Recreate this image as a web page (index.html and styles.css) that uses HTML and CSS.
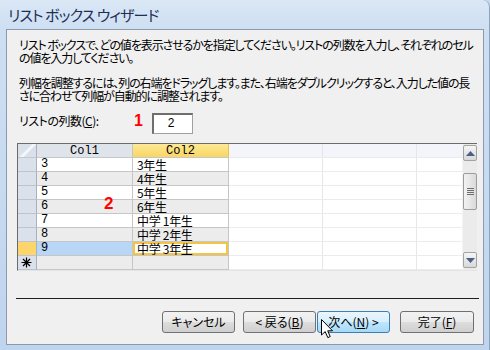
FILE: index.html
```html
<!DOCTYPE html>
<html lang="ja">
<head>
  <meta charset="UTF-8" />
  <title>リスト ボックス ウィザード</title>
  <link rel="stylesheet" href="styles.css">
</head>
<body>
  <div class="window">
    <div class="titlebar">リスト ボックス ウィザード</div>
    <div class="panel">
      <p class="intro">リスト ボックスで、どの値を表示させるかを指定してください。リストの列数を入力し、それぞれのセル<br>の値を入力してください。</p>
      <p class="intro">列幅を調整するには、列の右端をドラッグします。また、右端をダブルクリックすると、入力した値の長<br>さに合わせて列幅が自動的に調整されます。</p>

      <div class="count-row">
        <label class="count-label">リストの列数(<u>C</u>):</label>
        <span class="mark mark-1">1</span>
        <div class="count-box">2</div>
      </div>

      <div class="grid">
        <div class="sheet">
          <div class="row head">
            <div class="cell sel corner"></div>
            <div class="cell c1">Col1</div>
            <div class="cell c2 active-col">Col2</div>
            <div class="cell cx w94"></div>
            <div class="cell cx w94"></div>
            <div class="cell cx w45"></div>
          </div>
          <div class="row">
            <div class="cell sel"></div><div class="cell c1">3</div><div class="cell c2">3年生</div>
            <div class="cell cx w94"></div><div class="cell cx w94"></div><div class="cell cx w45"></div>
          </div>
          <div class="row alt">
            <div class="cell sel"></div><div class="cell c1">4</div><div class="cell c2">4年生</div>
            <div class="cell cx w94"></div><div class="cell cx w94"></div><div class="cell cx w45"></div>
          </div>
          <div class="row">
            <div class="cell sel"></div><div class="cell c1">5</div><div class="cell c2">5年生</div>
            <div class="cell cx w94"></div><div class="cell cx w94"></div><div class="cell cx w45"></div>
          </div>
          <div class="row alt">
            <div class="cell sel"></div><div class="cell c1">6</div><div class="cell c2">6年生</div>
            <div class="cell cx w94"></div><div class="cell cx w94"></div><div class="cell cx w45"></div>
          </div>
          <div class="row">
            <div class="cell sel"></div><div class="cell c1">7</div><div class="cell c2">中学 1年生</div>
            <div class="cell cx w94"></div><div class="cell cx w94"></div><div class="cell cx w45"></div>
          </div>
          <div class="row alt">
            <div class="cell sel"></div><div class="cell c1">8</div><div class="cell c2">中学 2年生</div>
            <div class="cell cx w94"></div><div class="cell cx w94"></div><div class="cell cx w45"></div>
          </div>
          <div class="row current">
            <div class="cell sel"></div><div class="cell c1">9</div><div class="cell c2 editing">中学 3年生</div>
            <div class="cell cx w94"></div><div class="cell cx w94"></div><div class="cell cx w45"></div>
          </div>
          <div class="row alt new">
            <div class="cell sel">
              <svg width="11" height="11" viewBox="0 0 11 11"><path d="M5.5 0.5v10M0.5 5.5h10M2 2l7 7M9 2l-7 7" stroke="#000" stroke-width="1.2" fill="none"/></svg>
            </div>
            <div class="cell c1"></div><div class="cell c2"></div>
            <div class="cell cx w94"></div><div class="cell cx w94"></div><div class="cell cx w45"></div>
          </div>
        </div>

        <div class="scrollbar">
          <div class="sb-btn sb-up"><svg width="9" height="5" viewBox="0 0 9 5"><path d="M0 5L4.5 0L9 5Z" fill="#4a5f86"/></svg></div>
          <div class="sb-thumb"><span></span><span></span><span></span><span></span></div>
          <div class="sb-space"></div>
          <div class="sb-btn sb-down"><svg width="9" height="5" viewBox="0 0 9 5"><path d="M0 0L4.5 5L9 0Z" fill="#4a5f86"/></svg></div>
        </div>

        <span class="mark mark-2">2</span>
      </div>

      <div class="separator"></div>

      <div class="buttons">
        <button class="btn">キャンセル</button>
        <button class="btn btn-back">&lt; 戻る(<u>B</u>)</button>
        <button class="btn btn-next hover">次へ(<u>N</u>) &gt;</button>
        <button class="btn btn-finish">完了(<u>F</u>)</button>
      </div>
    </div>

    <!-- mouse pointer over the next button -->
    <svg class="cursor" width="13" height="20" viewBox="0 0 13 20">
      <path d="M0.5 0.5L0.5 16L4.2 12.6L6.8 18.6L9.2 17.6L6.7 11.8L11.5 11.8Z" fill="#fff" stroke="#000" stroke-width="1" stroke-linejoin="miter"/>
    </svg>
  </div>
</body>
</html>
```

FILE: styles.css
```css
* {
  margin: 0;
  padding: 0;
  box-sizing: border-box;
}

body {
  width: 490px;
  height: 350px;
  overflow: hidden;
  font-family: "Noto Sans CJK JP", "Noto Sans", sans-serif;
  font-size: 12px;
  color: #000;
  background: #c3d8ef;
}

.window {
  position: relative;
  height: 350px;
  background: linear-gradient(180deg, #dae7f5 0%, #cddff2 30px, #bfd5ee 100%);
  border-top-right-radius: 7px;
  border-right: 1px solid #8ea4be;
  padding: 0 5px 5px 6px;
  display: flex;
  flex-direction: column;
}

.titlebar {
  height: 29px;
  line-height: 29px;
  padding-left: 2px;
  font-size: 15px;
  letter-spacing: -0.9px;
  color: #1d2f57;
  font-feature-settings: "palt";
  white-space: nowrap;
}

.panel {
  flex: 1;
  background: #f0f0f0;
  border: 1px solid #8e9aab;
  padding-left: 10px;
  display: flex;
  flex-direction: column;
}

.intro {
  padding-left: 2px;
  line-height: 13px;
  white-space: nowrap;
  font-feature-settings: "palt";
  letter-spacing: -1.1px;
  margin-top: 8px;
}

.intro + .intro {
  margin-top: 12px;
}

.count-row {
  display: flex;
  align-items: flex-start;
  padding-left: 2px;
  margin-top: 11px;
  height: 21px;
}

.count-label {
  width: 115px;
  line-height: 13px;
  padding-top: 1px;
  letter-spacing: -0.5px;
  font-feature-settings: "palt";
}

.mark {
  color: #f00;
  font-family: "Liberation Sans", Arial, sans-serif;
  font-weight: bold;
  font-size: 16px;
}

.mark-1 {
  width: 18px;
  line-height: 16px;
}

.count-box {
  width: 41px;
  height: 21px;
  background: #fff;
  border: 1px solid #a0a0a0;
  border-top: 2px solid #6e6e6e;
  border-left: 2px solid #6e6e6e;
  text-align: center;
  line-height: 16px;
  padding-right: 4px;
  font-family: "Liberation Sans", Arial, sans-serif;
}

/* datasheet */
.grid {
  position: relative;
  display: flex;
  margin-top: 9px;
  width: 460px;
  height: 128px;
  border-top: 1px solid #6b6b6b;
  border-left: 1px solid #6b6b6b;
  border-bottom: 1px solid #e4e4e4;
  background: #fff;
}

.sheet {
  width: 444px;
}

.row {
  display: flex;
  height: 14px;
}

.cell {
  height: 14px;
  line-height: 13px;
  padding-left: 4px;
  border-right: 1px solid #c6c6c6;
  border-bottom: 1px solid #c6c6c6;
  white-space: nowrap;
  font-family: "Liberation Mono", "Noto Sans CJK JP", monospace;
  font-size: 12px;
}

.c2 {
  font-family: "Noto Sans CJK JP", sans-serif;
  font-size: 12px;
  letter-spacing: -0.3px;
}

.sel {
  width: 19px;
  background: #dbe1ea;
  border-right-color: #a9b1bd;
  border-bottom-color: #bdc4cf;
  padding-left: 4px;
}

.c1, .c2 {
  width: 96px;
}

.cx {
  border-right-color: #e7e7e7;
  border-bottom-color: #ececec;
}

.w94 { width: 94px; }
.w45 { width: 45px; border-right: none; }

.row.alt .c1,
.row.alt .c2 {
  background: #ececec;
}

.head .cell {
  text-align: center;
  padding-left: 0;
  background: #dfe3ea;
  border-bottom-color: #c3c8d0;
  font-family: "Liberation Mono", monospace;
  font-size: 12px;
  letter-spacing: 0;
  line-height: 14px;
}

.head .corner {
  background: linear-gradient(135deg, #dbe1ea 0 45%, #f4f6fa 46% 60%, #dbe1ea 61%);
}

.head .active-col {
  background: linear-gradient(180deg, #fde996 0%, #f9d563 100%);
  border-right-color: #e8c257;
}

.head .cx {
  background: #f3f5fb;
  border-right-color: #e4e7ee;
  border-bottom-color: #e9ebf1;
}

.row.current .sel {
  background: #fdd66b;
}

.row.current .c1 {
  background: #b8d6f6;
}

.row.current .editing {
  box-shadow: inset 0 0 0 2px #f4c443;
  padding-left: 4px;
}

.row.new .sel {
  display: flex;
  align-items: center;
  padding-left: 3px;
}

.scrollbar {
  width: 15px;
  background: #ebebeb;
  display: flex;
  flex-direction: column;
  align-items: center;
  border-left: 1px solid #f4f4f4;
}

.sb-btn {
  width: 14px;
  height: 16px;
  border: 1px solid #a3a3a3;
  border-radius: 2px;
  background: linear-gradient(180deg, #f6f6f6 0%, #e6e6e6 50%, #d8d8d8 100%);
  display: flex;
  align-items: center;
  justify-content: center;
}

.sb-up {
  margin-top: 1px;
}

.sb-down {
  margin-bottom: 2px;
}

.sb-thumb {
  width: 14px;
  height: 37px;
  margin-top: 12px;
  border: 1px solid #9c9c9c;
  border-radius: 2px;
  background: linear-gradient(90deg, #f2f2f2 0%, #e4e4e4 60%, #dadada 100%);
  display: flex;
  flex-direction: column;
  align-items: center;
  justify-content: center;
  gap: 1px;
}

.sb-thumb span {
  width: 7px;
  height: 1px;
  background: #6f6f6f;
}

.sb-space {
  flex: 1;
}

.mark-2 {
  position: absolute;
  left: 86px;
  top: 50px;
  font-size: 17px;
}

.separator {
  margin-top: 27px;
  margin-left: -1px;
  width: 463px;
  border-top: 1px solid #1e1e1e;
}

.buttons {
  display: flex;
  justify-content: flex-end;
  padding-right: 9px;
  margin-top: 12px;
}

.btn {
  width: 73px;
  height: 22px;
  border: 1px solid #707070;
  border-radius: 3px;
  background: linear-gradient(180deg, #f2f2f2 0%, #ebebeb 48%, #dddddd 52%, #cfcfcf 100%);
  font-family: "Noto Sans CJK JP", sans-serif;
  font-size: 12px;
  font-feature-settings: "palt";
  color: #000;
  line-height: 18px;
}

.btn-back {
  margin-left: 8px;
}

.btn-next {
  margin-left: 1px;
}

.btn-next.hover {
  border-color: #3c7fb1;
  background: linear-gradient(180deg, #eaf6fd 0%, #d9f0fc 48%, #bee6fd 52%, #a7d9f5 100%);
}

.btn-finish {
  width: 74px;
  margin-left: 10px;
}

.cursor {
  position: absolute;
  left: 321px;
  top: 319px;
}
```
